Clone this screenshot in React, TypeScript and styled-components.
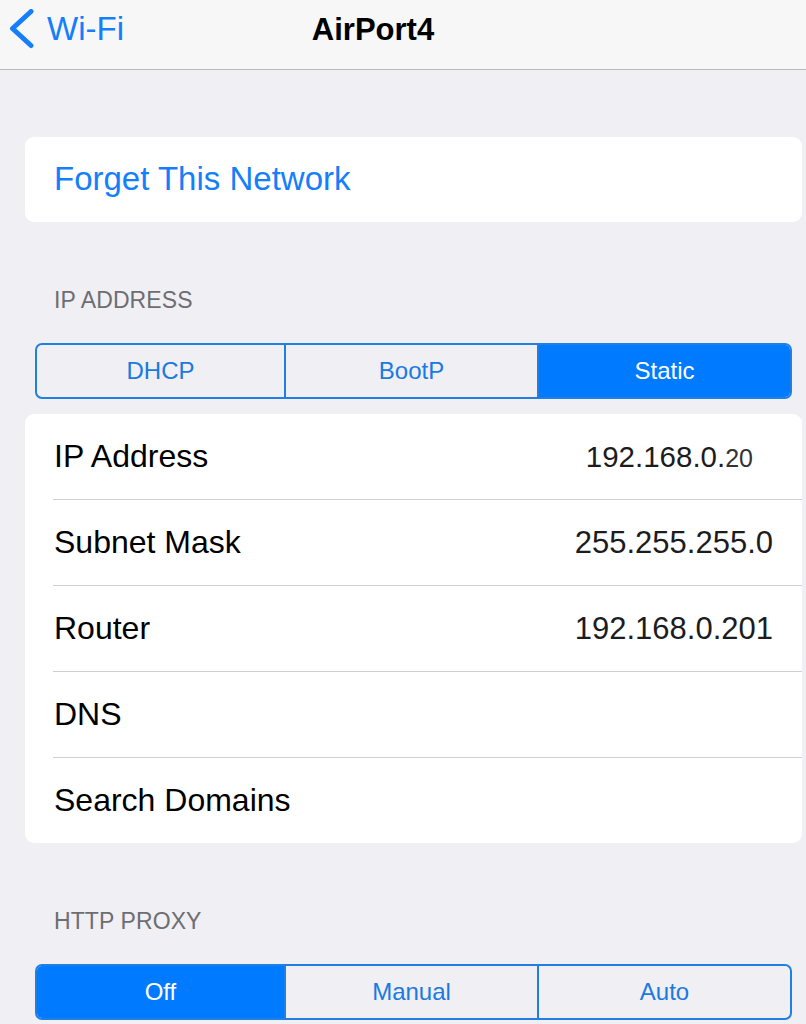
import React from "react";
import styled, { createGlobalStyle } from "styled-components";

const Global = createGlobalStyle`
  html, body { margin: 0; padding: 0; background: #efeff4; }
  body { font-family: "Liberation Sans", Arial, sans-serif; -webkit-font-smoothing: antialiased; }
`;

const BLUE = "#147efb";
const SEG_BLUE = "#007aff";

const Page = styled.div`
  width: 806px;
  height: 1024px;
  overflow: hidden;
  background: #efeff4;
  display: flex;
  flex-direction: column;
`;

const NavBar = styled.header`
  height: 69px;
  flex-shrink: 0;
  background: #f7f7f8;
  border-bottom: 1px solid #b9b9bd;
  display: grid;
  grid-template-columns: 1fr auto 1fr;
  align-items: start;
`;

const BackButton = styled.div`
  display: flex;
  align-items: center;
  gap: 11px;
  padding: 9px 0 0 8px;
  color: ${BLUE};
  font-size: 33px;
  line-height: 38px;
`;

const NavTitle = styled.div`
  padding-top: 12px;
  font-size: 31px;
  font-weight: bold;
  line-height: 36px;
  color: #000;
  position: relative;
  left: -30px;
`;

const Card = styled.section<{ top: number }>`
  margin: ${(p) => p.top}px 4px 0 25px;
  background: #fff;
  border-radius: 9px;
  overflow: hidden;
`;

const ActionRow = styled.div`
  height: 85px;
  display: flex;
  align-items: center;
  padding-left: 29px;
  color: ${BLUE};
  font-size: 33px;
  padding-bottom: 2px;
  box-sizing: border-box;
`;

const SectionHeader = styled.div<{ top: number }>`
  margin: ${(p) => p.top}px 0 0 54px;
  height: 28px;
  line-height: 28px;
  font-size: 23px;
  color: #6d6d72;
  letter-spacing: 0.1px;
`;

const Segmented = styled.div`
  margin: 29px 14px 0 35px;
  height: 56px;
  box-sizing: border-box;
  border: 2px solid #1f7fe3;
  border-radius: 7px;
  display: grid;
  grid-template-columns: 249px 253px 1fr;
  overflow: hidden;
`;

const Segment = styled.div<{ selected: boolean; last?: boolean }>`
  display: flex;
  align-items: center;
  justify-content: center;
  font-size: 24px;
  background: ${(p) => (p.selected ? SEG_BLUE : "transparent")};
  color: ${(p) => (p.selected ? "#fff" : "#1a7ae0")};
  border-right: ${(p) => (p.last ? "none" : "2px solid #1f7fe3")};
`;

const Row = styled.div`
  height: 86px;
  display: flex;
  align-items: center;
  justify-content: space-between;
  margin-left: 28px;
  padding-right: 29px;
  border-bottom: 1px solid #cfcfd3;
  box-sizing: border-box;
  &:last-child { border-bottom: none; height: 85px; }
`;

const Label = styled.span`
  font-size: 32px;
  color: #000;
  padding-left: 1px;
`;

const Value = styled.span<{ inset?: number; size?: number }>`
  font-size: ${(p) => p.size ?? 31}px;
  color: #1c1c1e;
  margin-right: ${(p) => p.inset ?? 0}px;
`;

const Small = styled.span`
  font-size: 25px;
  color: #333;
`;

const Chevron = () => (
  <svg width="28" height="40" viewBox="0 0 28 40" fill="none">
    <path d="M23 2.5 L4.5 19.5 L23 36.5" stroke={BLUE} strokeWidth="5" strokeLinecap="round" strokeLinejoin="round" />
  </svg>
);

const fields: { label: string; value?: React.ReactNode; inset?: number; size?: number }[] = [
  { label: "IP Address", value: <>192.168.0.<Small>20</Small></>, inset: 20, size: 29.5 },
  { label: "Subnet Mask", value: "255.255.255.0" },
  { label: "Router", value: "192.168.0.201" },
  { label: "DNS" },
  { label: "Search Domains" },
];

export default function App() {
  return (
    <Page>
      <Global />
      <NavBar>
        <BackButton>
          <Chevron />
          <span>Wi-Fi</span>
        </BackButton>
        <NavTitle>AirPort4</NavTitle>
        <div />
      </NavBar>

      <Card top={67}>
        <ActionRow>Forget This Network</ActionRow>
      </Card>

      <SectionHeader top={64}>IP ADDRESS</SectionHeader>
      <Segmented>
        <Segment selected={false}>DHCP</Segment>
        <Segment selected={false}>BootP</Segment>
        <Segment selected last>Static</Segment>
      </Segmented>

      <Card top={15}>
        {fields.map((f) => (
          <Row key={f.label}>
            <Label>{f.label}</Label>
            {f.value && (
              <Value inset={f.inset} size={f.size}>
                {f.value}
              </Value>
            )}
          </Row>
        ))}
      </Card>

      <SectionHeader top={64}>HTTP PROXY</SectionHeader>
      <Segmented>
        <Segment selected>Off</Segment>
        <Segment selected={false}>Manual</Segment>
        <Segment selected={false} last>Auto</Segment>
      </Segmented>
    </Page>
  );
}
